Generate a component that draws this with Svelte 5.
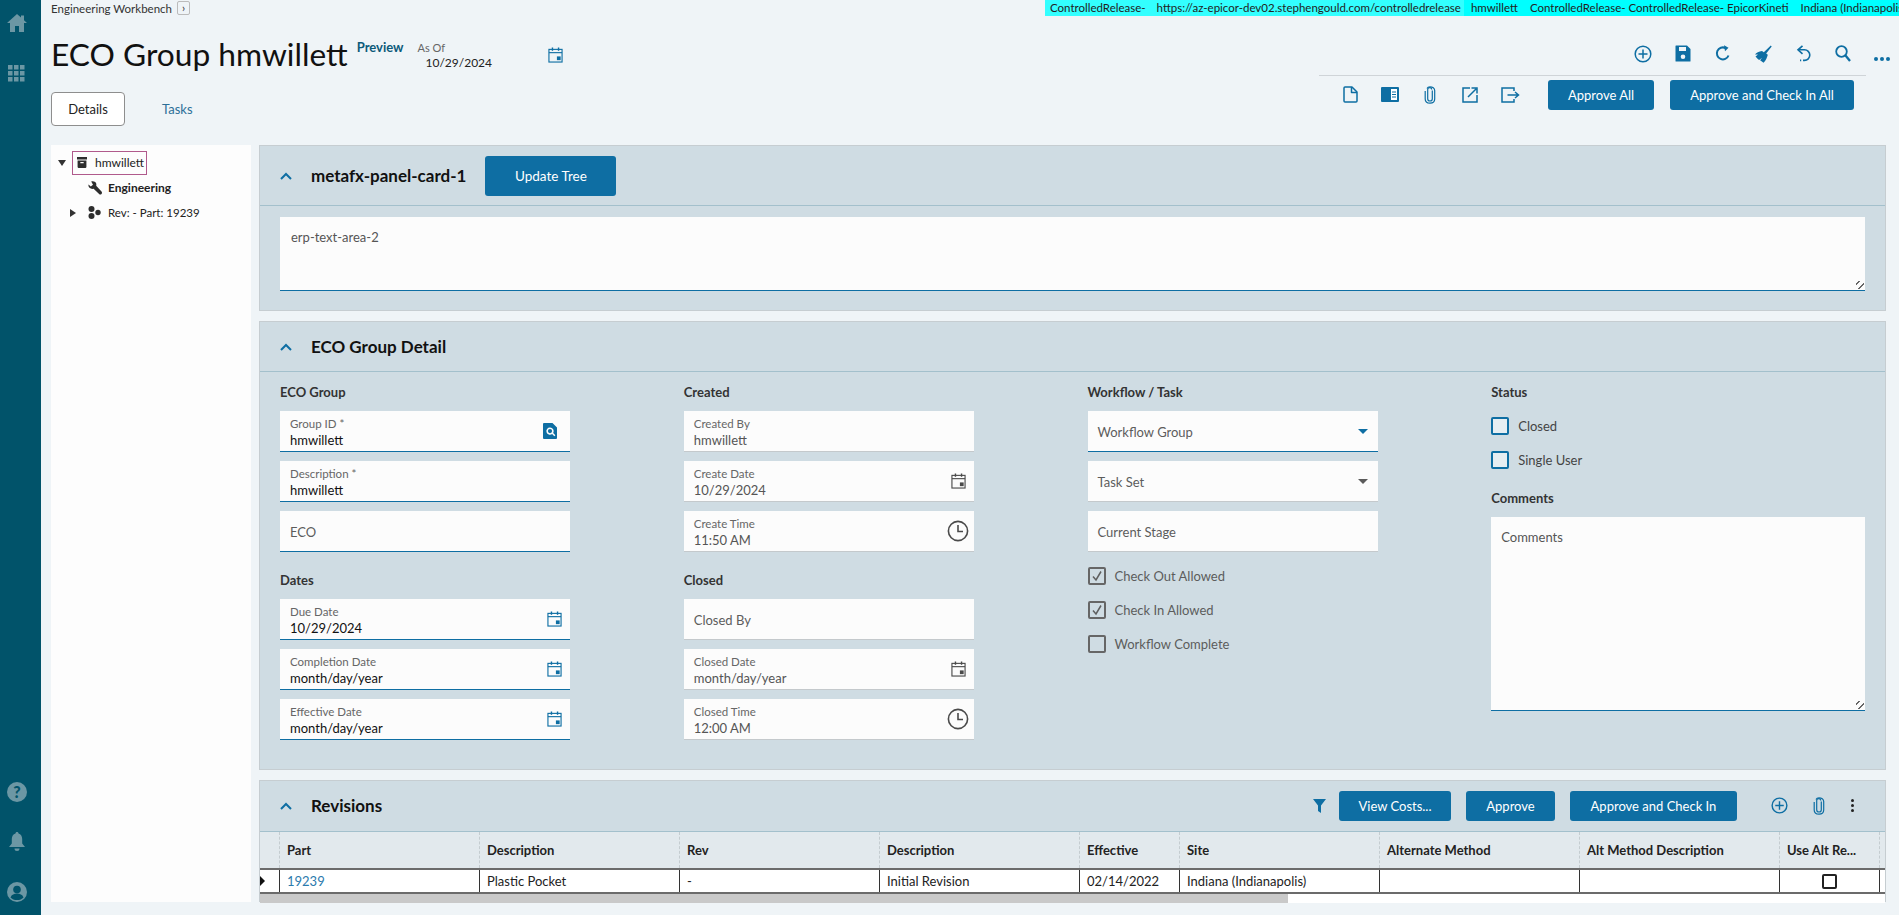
<script>
  const cols = [
    {
      groups: [
        { title: 'ECO Group', fields: [
          { label: 'Group ID *', value: 'hmwillett', icon: 'search', active: true },
          { label: 'Description *', value: 'hmwillett', active: true },
          { placeholder: 'ECO', active: true }
        ]},
        { title: 'Dates', fields: [
          { label: 'Due Date', value: '10/29/2024', icon: 'cal', active: true },
          { label: 'Completion Date', value: 'month/day/year', icon: 'cal', active: true },
          { label: 'Effective Date', value: 'month/day/year', icon: 'cal', active: true }
        ]}
      ]
    },
    {
      groups: [
        { title: 'Created', fields: [
          { label: 'Created By', value: 'hmwillett' },
          { label: 'Create Date', value: '10/29/2024', icon: 'calg' },
          { label: 'Create Time', value: '11:50 AM', icon: 'clock' }
        ]},
        { title: 'Closed', fields: [
          { placeholder: 'Closed By' },
          { label: 'Closed Date', value: 'month/day/year', icon: 'calg' },
          { label: 'Closed Time', value: '12:00 AM', icon: 'clock' }
        ]}
      ]
    }
  ];
  const gridCols = [
    { t: 'Part', w: 200, v: '19239', link: true },
    { t: 'Description', w: 200, v: 'Plastic Pocket' },
    { t: 'Rev', w: 200, v: '-' },
    { t: 'Description', w: 200, v: 'Initial Revision' },
    { t: 'Effective', w: 100, v: '02/14/2022' },
    { t: 'Site', w: 200, v: 'Indiana (Indianapolis)' },
    { t: 'Alternate Method', w: 200, v: '' },
    { t: 'Alt Method Description', w: 200, v: '' },
    { t: 'Use Alt Re...', w: 100, v: '', check: true }
  ];
</script>

{#snippet cal(color = '#0e6ea3', size = 16)}
  <svg class="ic" width={size} height={size + 1} viewBox="0 0 16 17" fill="none">
    <rect x="1" y="2.500" width="14" height="13.500" stroke={color} stroke-width="1.200" fill="none" />
    <path d="M1 6h14" stroke={color} stroke-width="1.200" />
    <rect x="4" y="0.500" width="1.500" height="3.500" fill={color} />
    <rect x="10.500" y="0.500" width="1.500" height="3.500" fill={color} />
    <rect x="9.500" y="10" width="4" height="4" fill={color} />
  </svg>
{/snippet}

{#snippet clock()}
  <svg class="ic" width="22" height="22" viewBox="0 0 22 22" fill="none" stroke="#4a4a4a" stroke-width="1.600">
    <circle cx="11" cy="11" r="9.600" />
    <path d="M11 5v6.500h5" />
  </svg>
{/snippet}

{#snippet plus(size = 18)}
  <svg class="ic" width={size} height={size} viewBox="0 0 18 18" fill="none" stroke="#0e6ea3" stroke-width="1.500">
    <circle cx="9" cy="9" r="7.800" /><path d="M9 4.500v9M4.500 9h9" />
  </svg>
{/snippet}

{#snippet clip(h = 18)}
  <svg class="ic" width="12" height={h} viewBox="0 0 12 18" fill="none" stroke="#0e6ea3" stroke-width="1.200">
    <path d="M8.300 4.500v8.200a2.300 2.300 0 0 1-4.600 0V3.600a2 2 0 0 1 4 0" />
    <path d="M3 2.600C3.600 1.300 4.500.8 6 .8c2.500 0 4.700 1.200 4.700 3.700v8.600c0 2.600-2 4.100-4.700 4.100s-4.800-1.500-4.800-4.100V5" />
  </svg>
{/snippet}

<div class="app">
  <nav class="rail">
    <div class="rail-top">
      <svg width="20" height="18" viewBox="0 0 20 18"><path fill="#6c97a4" d="M10 0 0 9h3v9h5v-6h4v6h5V9h3l-3-2.700V1.500h-3v2.100z" /></svg>
      <svg width="17" height="17" viewBox="0 0 17 17" fill="#6c97a4">
        {#each [0, 6, 12] as y}{#each [0, 6, 12] as x}<rect {x} {y} width="4.500" height="4.500" />{/each}{/each}
      </svg>
    </div>
    <div class="rail-bottom">
      <svg width="20" height="20" viewBox="0 0 20 20"><circle cx="10" cy="10" r="10" fill="#6c97a4" /><text x="10" y="15.500" text-anchor="middle" class="q">?</text></svg>
      <svg width="16" height="20" viewBox="0 0 16 20"><path fill="#6c97a4" d="M8 0c1 0 1.500.7 1.500 1.500 2.500.7 3.700 3 3.700 5.500v4.500L16 15H0l2.800-3.500V7c0-2.500 1.200-4.800 3.700-5.500C6.500.7 7 0 8 0zM5.500 16.500h5a2.500 2.500 0 0 1-5 0z" /></svg>
      <svg width="20" height="20" viewBox="0 0 20 20"><circle cx="10" cy="10" r="10" fill="#6c97a4" /><circle cx="10" cy="7.500" r="3.800" fill="#01536a" /><path d="M3.500 15.500c1-3 3.800-4 6.500-4s5.500 1 6.500 4c-1.500 1.600-3.800 2.600-6.500 2.600s-5-1-6.500-2.600z" fill="#01536a" /></svg>
    </div>
  </nav>

  <div class="page">
    <header class="head">
      <div class="crumbs">
        <span class="crumb">Engineering Workbench</span>
        <span class="crumb-btn">›</span>
        <div class="banner">
          <div class="b-left">
            <span>ControlledRelease-</span>
            <span class="url">https://az-epicor-dev02.stephengould.com/controlledrelease</span>
          </div>
          <span class="b2">hmwillett</span>
          <span class="b2">ControlledRelease- ControlledRelease- EpicorKineti</span>
          <span class="b2 fill">Indiana (Indianapolis)</span>
        </div>
      </div>

      <div class="title-row">
        <div class="title-left">
          <h1>ECO Group hmwillett</h1>
          <span class="preview">Preview</span>
          <div class="asof">
            <span class="asof-l">As Of</span>
            <span class="asof-v">10/29/2024</span>
          </div>
          <span class="title-cal">{@render cal('#0e6ea3', 15)}</span>
        </div>

        <div class="tools">
          <div class="tools-top">
            <span class="cell">{@render plus(18)}</span>
            <span class="cell"><svg class="ic" width="16" height="17" viewBox="0 0 16 17"><path fill="#0e6ea3" d="M1 .5h11l3.500 3.500v12a.5.5 0 0 1-.5.5H1a.5.5 0 0 1-.5-.5V1A.5.5 0 0 1 1 .5zM4 2v4h7V2zm4 7.500a2.300 2.300 0 1 0 0 4.600 2.300 2.300 0 0 0 0-4.600z" fill-rule="evenodd" /></svg></span>
            <span class="cell"><svg class="ic" width="16" height="17" viewBox="0 0 16 17" fill="none" stroke="#0e6ea3" stroke-width="2"><path d="M13.500 10.500A6 6 0 1 1 10.500 3" /><path d="M9 .3l4.500 2.400L10 6.300z" fill="#0e6ea3" stroke="none" /></svg></span>
            <span class="cell"><svg class="ic" width="18" height="18" viewBox="0 0 18 18"><path fill="#0e6ea3" d="M16.800.6l.9.8-5.500 7 1.600 1.300c-.5 1.500-1 3.600-2.100 5.300-.5.800-1.600 2.600-2.200 2.700-1-.7-2.300-1.500-3.400-2.400l2-2.600-3 2.200C3.800 14 2.800 13 1.500 11.400l2.500-1.800-3-.2c1.300-1.500 3.900-3.400 7-3.500l1.800 1.300z" /></svg></span>
            <span class="cell"><svg class="ic" width="15" height="18" viewBox="0 0 15 18" fill="none" stroke="#0e6ea3" stroke-width="1.600"><path d="M3 4.800h5.500a5.300 5.300 0 0 1 0 10.600H7" /><path d="M4 15.400h1.200" /><path d="M6.500 .8 2 4.800l4.500 4" /></svg></span>
            <span class="cell"><svg class="ic" width="16" height="17" viewBox="0 0 16 17" fill="none" stroke="#0e6ea3" stroke-width="1.800"><circle cx="6.500" cy="6.500" r="5.300" /><path d="M10.500 10.500 15 16" stroke-width="2.300" /></svg></span>
          </div>
          <div class="tools-bottom">
            <span class="cell"><svg class="ic" width="15" height="17" viewBox="0 0 15 17" fill="none" stroke="#0e6ea3" stroke-width="1.500" stroke-linejoin="round"><path d="M1 2a1 1 0 0 1 1-1h7l5 5v9a1 1 0 0 1-1 1H2a1 1 0 0 1-1-1z" /><path d="M8.500 1v5.500H14" /></svg></span>
            <span class="cell"><svg class="ic" width="18" height="15" viewBox="0 0 18 15"><rect width="18" height="15" rx="1" fill="#0e6ea3" /><rect x="10" y="2" width="6" height="11" fill="#fff" /><path d="M11 5h4M11 7.500h4M11 10h4" stroke="#0e6ea3" stroke-width="1" /></svg></span>
            <span class="cell">{@render clip(20)}</span>
            <span class="cell"><svg class="ic" width="16" height="16" viewBox="0 0 16 16" fill="none" stroke="#0e6ea3" stroke-width="1.500"><path d="M8 1H1v14h14V8" /><path d="M6 10 14 2M9.500 1H15v5.500" /></svg></span>
            <span class="cell"><svg class="ic" width="19" height="16" viewBox="0 0 19 16" fill="none" stroke="#0e6ea3" stroke-width="1.500"><path d="M13 4V1H1v14h12v-3" /><path d="M6.500 8H17M14 5l3.500 3-3.500 3" /></svg></span>
            <button class="btn b-all">Approve All</button>
            <button class="btn b-checkin">Approve and Check In All</button>
          </div>
          <span class="more"><i></i><i></i><i></i></span>
        </div>
      </div>

      <div class="tabs">
        <span class="tab on">Details</span>
        <span class="tab">Tasks</span>
      </div>
    </header>

    <div class="body">
      <aside class="tree">
        <div class="t-row root">
          <span class="tri down"></span>
          <span class="t-sel">
            <svg width="12" height="13" viewBox="0 0 12 13"><path fill="#2d2d2d" d="M0 0h12v3H0zM.7 4h10.600v8a1 1 0 0 1-1 1H1.700a1 1 0 0 1-1-1zM4 6v1.500h4V6z" fill-rule="evenodd" /></svg>
            hmwillett
          </span>
        </div>
        <div class="t-row eng">
          <svg width="14" height="14" viewBox="0 0 14 14"><path fill="#2d2d2d" d="M.5 3.500 2.800 5.500 5 3.800 3.200.5C5 -.3 7.300.4 8 2c.4 1 .4 2 .2 2.800l5.300 5.700c.7.800.6 1.700 0 2.400-.7.700-1.700.7-2.400 0L5.600 7.800c-1 .3-2.300.1-3.300-.6C.9 6.300.2 5 .5 3.500z" /></svg>
          <b>Engineering</b>
        </div>
        <div class="t-row rev">
          <span class="tri right"></span>
          <svg width="13" height="13" viewBox="0 0 13 13" fill="#2d2d2d"><circle cx="3.500" cy="3" r="3" /><circle cx="10" cy="6.500" r="2.700" /><circle cx="3.500" cy="10" r="3" /></svg>
          Rev: - Part: 19239
        </div>
      </aside>

      <main class="panels">
        <section class="panel p1">
          <div class="p-head">
            <svg class="chev" width="12" height="8" viewBox="0 0 12 8" fill="none" stroke="#0e6ea3" stroke-width="2"><path d="M1 7l5-5 5 5" /></svg>
            <h2>metafx-panel-card-1</h2>
            <button class="btn update">Update Tree</button>
          </div>
          <div class="p-body">
            <div class="area small"><span>erp-text-area-2</span><i class="grip"></i></div>
          </div>
        </section>

        <section class="panel p2">
          <div class="p-head short">
            <svg class="chev" width="12" height="8" viewBox="0 0 12 8" fill="none" stroke="#0e6ea3" stroke-width="2"><path d="M1 7l5-5 5 5" /></svg>
            <h2>ECO Group Detail</h2>
          </div>
          <div class="detail">
            {#each cols as col}
              <div class="col">
                {#each col.groups as g}
                  <div class="group">
                    <h3>{g.title}</h3>
                    {#each g.fields as f}
                      <div class="field" class:active={f.active}>
                        {#if f.placeholder}
                          <span class="ph">{f.placeholder}</span>
                        {:else}
                          <span class="lbl">{f.label}</span>
                          <span class="val" class:muted={!f.active}>{f.value}</span>
                        {/if}
                        {#if f.icon === 'search'}
                          <svg class="f-ic srch" width="14" height="16" viewBox="0 0 14 16"><path fill="#0e6ea3" fill-rule="evenodd" d="M1 0h8.500L14 4.500V15a1 1 0 0 1-1 1H1a1 1 0 0 1-1-1V1a1 1 0 0 1 1-1zM7 4.500a3.600 3.600 0 1 0 2.100 6.500l2.200 2.300 1.100-1.100-2.200-2.300A3.600 3.600 0 0 0 7 4.500zm0 1.500a2.100 2.100 0 1 1 0 4.200A2.100 2.100 0 0 1 7 6z" /></svg>
                        {:else if f.icon === 'cal'}
                          <span class="f-ic">{@render cal('#0e6ea3', 15)}</span>
                        {:else if f.icon === 'calg'}
                          <span class="f-ic">{@render cal('#4a4a4a', 15)}</span>
                        {:else if f.icon === 'clock'}
                          <span class="f-ic clk">{@render clock()}</span>
                        {/if}
                      </div>
                    {/each}
                  </div>
                {/each}
              </div>
            {/each}

            <div class="col">
              <div class="group">
                <h3>Workflow / Task</h3>
                <div class="field active"><span class="ph">Workflow Group</span><span class="caret blue"></span></div>
                <div class="field"><span class="ph">Task Set</span><span class="caret"></span></div>
                <div class="field"><span class="ph">Current Stage</span></div>
                <div class="checks">
                  <div class="chk"><span class="box grey"><svg width="12" height="12" viewBox="0 0 12 12" fill="none" stroke="#5f5f5f" stroke-width="1.500"><path d="M2 6.500 5 10l5-8.500" /></svg></span>Check Out Allowed</div>
                  <div class="chk"><span class="box grey"><svg width="12" height="12" viewBox="0 0 12 12" fill="none" stroke="#5f5f5f" stroke-width="1.500"><path d="M2 6.500 5 10l5-8.500" /></svg></span>Check In Allowed</div>
                  <div class="chk"><span class="box grey"></span>Workflow Complete</div>
                </div>
              </div>
            </div>

            <div class="col last">
              <h3>Status</h3>
              <div class="chk s"><span class="box blue"></span>Closed</div>
              <div class="chk s"><span class="box blue"></span>Single User</div>
              <h3 class="cm">Comments</h3>
              <div class="area big"><span>Comments</span><i class="grip"></i></div>
            </div>
          </div>
        </section>

        <section class="panel p3">
          <div class="p-head rev-head">
            <svg class="chev" width="12" height="8" viewBox="0 0 12 8" fill="none" stroke="#0e6ea3" stroke-width="2"><path d="M1 7l5-5 5 5" /></svg>
            <h2>Revisions</h2>
            <div class="rev-tools">
              <svg class="ic" width="13" height="14" viewBox="0 0 13 14"><path fill="#0e6ea3" d="M0 0h13L8 6.500V14l-3-2V6.500z" /></svg>
              <button class="btn vc">View Costs...</button>
              <button class="btn ap">Approve</button>
              <button class="btn apc">Approve and Check In</button>
              <span class="rt-plus">{@render plus(17)}</span>
              <span class="rt-clip">{@render clip(18)}</span>
              <span class="kebab"><i></i><i></i><i></i></span>
            </div>
          </div>
          <div class="grid">
            <div class="g-row g-h">
              <div class="g-sel"></div>
              {#each gridCols as c}<div class="g-c" style="width:{c.w}px">{c.t}</div>{/each}
            </div>
            <div class="g-row g-d">
              <div class="g-sel"><span class="ptr"></span></div>
              {#each gridCols as c}
                <div class="g-c" class:lnk={c.link} style="width:{c.w}px">
                  {#if c.check}<span class="g-box"></span>{:else}{c.v}{/if}
                </div>
              {/each}
            </div>
            <div class="scroll"><span></span></div>
          </div>
        </section>
      </main>
    </div>
  </div>
</div>

<style>
  :global(body) { margin: 0; background: #eff4f7; }
  * { box-sizing: border-box; }
  .app { display: flex; width: 1899px; height: 915px; overflow: hidden; font-family: Lato, "Liberation Sans", sans-serif; font-size: 13px; color: #222; background: #eff4f7; }
  .ic { display: block; flex: none; }
  .rail { width: 41px; flex: none; background: #01536a; display: flex; flex-direction: column; justify-content: space-between; align-items: center; padding: 14px 8px 13px 0; }
  .rail-top { display: flex; flex-direction: column; align-items: center; gap: 33px; }
  .rail-bottom { display: flex; flex-direction: column; align-items: center; gap: 30px; }
  .q { font: 900 16px Lato, sans-serif; fill: #01536a; }

  .page { flex: 1; min-width: 0; display: flex; flex-direction: column; }
  .head { height: 145px; padding-left: 10px; flex: none; }
  .crumbs { display: flex; align-items: center; height: 16px; }
  .crumb { font-size: 11.500px; color: #333; }
  .crumb-btn { margin-left: 5px; width: 13px; height: 14px; border: 1px solid #bbb; border-radius: 2px; font-size: 11px; line-height: 11px; text-align: center; color: #333; }
  .banner { margin-left: auto; width: 854px; height: 16px; display: flex; background: #00ffff; white-space: nowrap; overflow: hidden; font-size: 11.500px; line-height: 16px; color: #222; }
  .b-left { display: flex; background: #33ffff; flex: none; }
  .banner span { padding: 0 5px; }
  .banner .url { margin-left: 1px; padding-right: 3px; }
  .banner .b2 { margin-left: 2px; }
  .banner .fill { flex: 1; }

  .title-row { display: flex; justify-content: space-between; height: 76px; }
  .title-left { display: flex; align-items: flex-start; padding-top: 15px; }
  h1 { margin: 0; font-size: 31.700px; line-height: 46px; font-weight: 400; color: #111; white-space: nowrap; }
  .preview { margin: 8px 0 0 9px; font-weight: 700; font-size: 13px; color: #0c5a7a; }
  .asof { display: flex; flex-direction: column; margin: 10px 0 0 14px; }
  .asof-l { font-size: 11px; color: #666; line-height: 14px; }
  .asof-v { font-size: 12px; line-height: 16px; margin-left: 8px; color: #222; }
  .title-cal { margin: 16px 0 0 56px; }

  .tools { position: relative; width: 547px; margin-right: 33px; display: flex; flex-direction: column; align-items: flex-end; height: 95px; }
  .tools-top { display: flex; align-items: flex-start; justify-content: flex-end; width: 100%; height: 60px; padding: 29px 3px 0 0; border-bottom: 1px solid #cfd4d8; flex: none; }
  .cell { width: 40px; display: flex; justify-content: center; flex: none; }
  .tools-bottom { display: flex; align-items: center; height: 33px; margin-top: 2px; padding-right: 12px; flex: none; }
  .more { position: absolute; right: -24px; top: 41px; display: flex; gap: 2px; }
  .more i { width: 4px; height: 4px; border-radius: 50%; background: #0e6ea3; }

  .btn { border: 0; background: #0e6ea3; color: #fff; border-radius: 3px; font: 13px Lato, sans-serif; height: 30px; padding: 0; white-space: nowrap; }
  .b-all { width: 106px; margin-left: 18px; }
  .b-checkin { width: 184px; margin-left: 16px; }

  .tabs { display: flex; align-items: center; gap: 37px; position: relative; margin-top: 0; height: 34px; width: 160px; }
  .tab { font-size: 13px; color: #2c6f97; }
  .tab.on { width: 74px; height: 34px; display: flex; align-items: center; justify-content: center; background: #fff; border: 1px solid #8e8e8e; border-radius: 4px; color: #222; }

  .body { flex: 1; min-height: 0; display: flex; padding: 0 13px 13px 10px; gap: 8px; }
  .tree { width: 200px; flex: none; background: #fdfdfd; padding-top: 5px; font-size: 12px; color: #222; }
  .t-row { display: flex; align-items: center; height: 25px; }
  .tri { width: 0; height: 0; display: block; flex: none; }
  .tri.down { margin-left: 7px; border-left: 4px solid transparent; border-right: 4px solid transparent; border-top: 6px solid #333; }
  .tri.right { margin-left: 19px; border-top: 4px solid transparent; border-bottom: 4px solid transparent; border-left: 6px solid #333; }
  .t-sel { display: flex; align-items: center; gap: 8px; margin-left: 6px; height: 24px; padding: 0 2px 0 4px; border: 1px solid #b05a8c; width: 75px; }
  .eng { padding-left: 37px; gap: 6px; }
  .eng b { font-weight: 700; }
  .rev { font-size: 11.500px; }
  .rev svg { margin: 0 7px 0 12px; }

  .panels { flex: 1; min-width: 0; display: flex; flex-direction: column; gap: 10px; }
  .panel { background: #cfdce3; border: 1px solid #c6cdd1; }
  .p1 { height: 166px; }
  .p2 { height: 449px; }
  .p3 { flex: 1; min-height: 0; border-bottom: 0; }
  .p-head { display: flex; align-items: center; height: 60px; border-bottom: 1px solid #a3c0cc; padding-left: 20px; }
  .p-head.short { height: 50px; }
  .chev { flex: none; margin-right: 19px; }
  h2 { margin: 0; font-size: 17px; font-weight: 700; color: #111; white-space: nowrap; }
  .update { width: 131px; height: 40px; margin-left: 19px; font-size: 13.500px; }
  .p-body { padding: 11px 20px 0; }
  .area { position: relative; background: #fcfcfc; border-bottom: 1px solid #0e6ea3; color: #555; font-size: 13px; }
  .area.small { height: 74px; padding: 12px 11px; }
  .area.big { height: 194px; padding: 12px 10px; }
  .grip { position: absolute; right: 1px; bottom: 1px; width: 8px; height: 8px; background: repeating-linear-gradient(135deg, transparent 0 2px, #666 2px 3px, transparent 3px 5px); }

  .detail { display: grid; grid-template-columns: repeat(4, 1fr); column-gap: 30px; padding: 10px 20px 0; }
  .col { min-width: 0; }
  h3 { margin: 0; font-size: 13px; line-height: 20px; font-weight: 700; color: #333; }
  .group { display: flex; flex-direction: column; gap: 9px; width: 290px; }
  .group + .group { margin-top: 18px; }
  .field { position: relative; height: 41px; background: #fcfcfc; border-bottom: 1px solid #c4c9cc; padding: 5px 10px 0; }
  .field.active { border-bottom: 1.500px solid #0e6ea3; }
  .lbl { display: block; font-size: 11.500px; line-height: 15px; color: #666; }
  .val { display: block; font-size: 13px; line-height: 18px; color: #111; }
  .val.muted { color: #555; }
  .ph { display: block; font-size: 13px; line-height: 33px; color: #5c5c5c; }
  .f-ic { position: absolute; right: 8px; top: 12px; display: block; }
  .f-ic.srch { right: 13px; }
  .f-ic.clk { right: 5px; top: 9px; }
  .caret { position: absolute; right: 10px; top: 18px; border-left: 5px solid transparent; border-right: 5px solid transparent; border-top: 5px solid #5a5a5a; }
  .caret.blue { border-top-color: #0e6ea3; }
  .checks { display: flex; flex-direction: column; gap: 16px; margin-top: 6px; }
  .chk { display: flex; align-items: center; gap: 9px; height: 18px; font-size: 13px; color: #5c5c5c; white-space: nowrap; }
  .box { width: 18px; height: 18px; border: 2px solid; border-radius: 2px; display: flex; align-items: center; justify-content: center; flex: none; }
  .box.grey { border-color: #666; }
  .box.blue { border-color: #0e6ea3; background: #e6eef2; }
  .chk.s { margin-top: 16px; color: #444; }
  .last h3 + .chk.s { margin-top: 15px; }
  .cm { margin-top: 19px; margin-bottom: 9px; }

  .rev-head { height: 51px; padding-bottom: 1px; }
  .rev-tools { margin-left: auto; display: flex; align-items: center; }
  .vc { width: 112px; margin-left: 13px; }
  .ap { width: 89px; margin-left: 15px; }
  .apc { width: 167px; margin-left: 15px; }
  .rt-plus { margin-left: 34px; }
  .rt-clip { margin-left: 25px; }
  .kebab { display: flex; flex-direction: column; gap: 2px; margin: 0 31px 0 26px; }
  .kebab i { width: 3px; height: 3px; background: #222; border-radius: 50%; }

  .grid { background: #fff; height: 71px; overflow: hidden; }
  .g-row { display: flex; white-space: nowrap; }
  .g-h { height: 38px; background: #e2e9ed; border-bottom: 2px solid #6b6b6b; font-weight: 700; color: #222; }
  .g-h .g-c { border-right: 1px dashed #c4ccd0; font-weight: 700; font-size: 13px; color: #222; }
  .g-h .g-sel { border-right: 1px dashed #c4ccd0; }
  .g-d { height: 24px; border-bottom: 2px solid #6b6b6b; background: #fff; }
  .g-sel { width: 20px; flex: none; border-right: 1px solid #333; position: relative; }
  .g-c { flex: none; display: flex; align-items: center; padding: 0 7px; border-right: 1px solid #333; font-size: 13px; }
  .lnk { color: #2b7aad; }
  .ptr { position: absolute; left: 0; top: 6px; border-top: 5px solid transparent; border-bottom: 5px solid transparent; border-left: 5px solid #111; }
  .g-box { width: 15px; height: 15px; border: 2px solid #222; border-radius: 2px; margin-left: 35px; }
  .scroll { height: 10px; background: #fff; }
  .scroll span { display: block; width: 1028px; height: 10px; background: #c9c9c9; }
</style>
